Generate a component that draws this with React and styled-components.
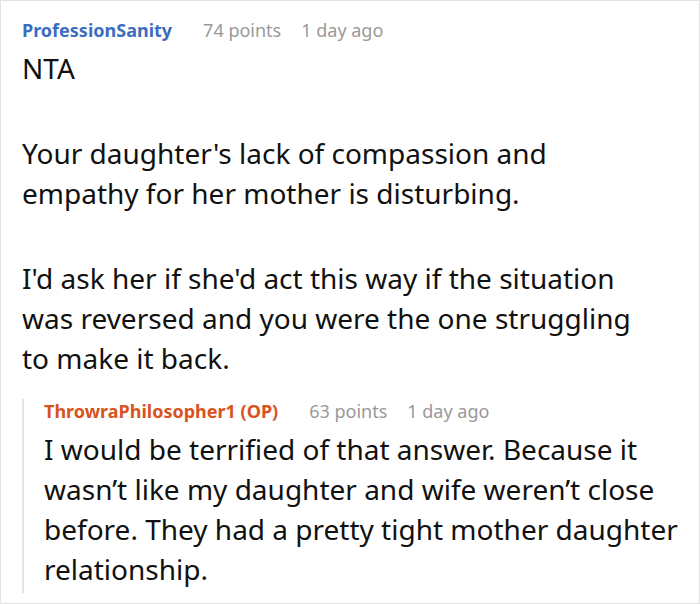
import React from "react";
import styled, { createGlobalStyle } from "styled-components";

const Global = createGlobalStyle`
  html, body { margin: 0; padding: 0; background: #fff; }
  body { font-family: "Noto Sans", "Open Sans", sans-serif; }
`;

const Frame = styled.div`
  box-sizing: border-box;
  width: 700px;
  height: 604px;
  border: 1px solid #e2e2e2;
  padding: 17px 21px 0 21px;
  overflow: hidden;
`;

const Header = styled.div`
  display: flex;
  align-items: baseline;
  font-size: 18px;
  line-height: 24px;
`;

const Author = styled.span`
  font-weight: 700;
  color: ${(p) => p.$color};
`;

const Meta = styled.span`
  color: #999;
  margin-left: ${(p) => p.$gap}px;
`;

const Body = styled.div`
  font-size: 28px;
  line-height: 40px;
  color: #111;
  margin-top: ${(p) => p.$top}px;
`;

const Para = styled.p`
  margin: 0 0 45px 0;
  &:last-child { margin-bottom: 0; }
`;

const Reply = styled.div`
  margin-top: 21px;
  border-left: 2px solid #e4e4e4;
  padding-left: 20px;
  padding-bottom: 4px;
`;

export default function App() {
  return (
    <>
      <Global />
      <Frame>
        <Header>
          <Author $color="#3b6cbf">ProfessionSanity</Author>
          <Meta $gap={31}>74 points</Meta>
          <Meta $gap={20}>1 day ago</Meta>
        </Header>
        <Body $top={6}>
          <Para>NTA</Para>
          <Para>
            Your daughter's lack of compassion and
            <br />
            empathy for her mother is disturbing.
          </Para>
          <Para>
            I'd ask her if she'd act this way if the situation
            <br />
            was reversed and you were the one struggling
            <br />
            to make it back.
          </Para>
        </Body>
        <Reply>
          <Header>
            <Author $color="#d9531e">ThrowraPhilosopher1 (OP)</Author>
            <Meta $gap={31}>63 points</Meta>
            <Meta $gap={20}>1 day ago</Meta>
          </Header>
          <Body $top={6}>
            <Para>
              I would be terrified of that answer. Because it
              <br />
              wasn’t like my daughter and wife weren’t close
              <br />
              before. They had a pretty tight mother daughter
              <br />
              relationship.
            </Para>
          </Body>
        </Reply>
      </Frame>
    </>
  );
}
